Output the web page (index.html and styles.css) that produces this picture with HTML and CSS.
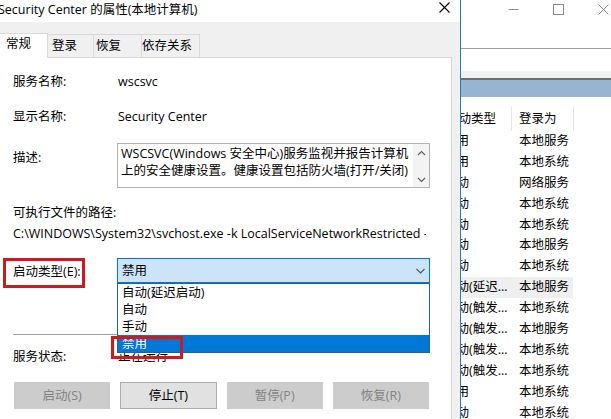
FILE: index.html
```html
<!DOCTYPE html>
<html lang="zh-CN">
<head>
<meta charset="utf-8">
<title>Security Center 的属性</title>
<link rel="stylesheet" href="styles.css">
</head>
<body>
<div class="screen">
  <div class="dialog">
    <div class="d-title">
      <span class="d-title-text">Security Center 的属性(本地计算机)</span>
      <svg class="d-close" width="11" height="11" viewBox="0 0 11 11"><path d="M0.5 0.5L10.5 10.5M10.5 0.5L0.5 10.5" stroke="#000" stroke-width="1.1" fill="none"/></svg>
    </div>
    <div class="tabs">
      <div class="tab active t1">常规</div>
      <div class="tab t2">登录</div>
      <div class="tab t3">恢复</div>
      <div class="tab t4">依存关系</div>
      <div class="tab-fill"></div>
    </div>
    <div class="panel">
      <div class="row r1"><div class="lbl">服务名称:</div><div class="val">wscsvc</div></div>
      <div class="row r2"><div class="lbl">显示名称:</div><div class="val">Security Center</div></div>
      <div class="row desc-row">
        <div class="lbl desc-lbl">描述:</div>
        <div class="desc-box">
          <div class="desc-text">WSCSVC(Windows 安全中心)服务监视并报告计算机<br>上的安全健康设置。健康设置包括防火墙(打开/关闭)</div>
          <div class="vscroll">
            <svg width="9" height="6" viewBox="0 0 9 6"><path d="M1 5L4.5 1.5L8 5" stroke="#606060" stroke-width="1.2" fill="none"/></svg>
            <svg width="9" height="6" viewBox="0 0 9 6"><path d="M1 1L4.5 4.5L8 1" stroke="#606060" stroke-width="1.2" fill="none"/></svg>
          </div>
        </div>
      </div>
      <div class="exe-lbl">可执行文件的路径:</div>
      <div class="exe-path">C:\WINDOWS\System32\svchost.exe -k LocalServiceNetworkRestricted -p</div>
      <div class="row start-row">
        <div class="lbl">启动类型(E):</div>
        <div class="combo-wrap">
          <div class="combo">
            <span>禁用</span>
            <svg width="9" height="6" viewBox="0 0 9 6"><path d="M0.5 1L4.5 5L8.5 1" stroke="#555" stroke-width="1.1" fill="none"/></svg>
          </div>
          <div class="dropdown">
            <div class="opt">自动(延迟启动)</div>
            <div class="opt">自动</div>
            <div class="opt">手动</div>
            <div class="opt sel">禁用</div>
          </div>
          <div class="hl-box"></div>
        </div>
        <div class="hl-label"></div>
      </div>
      <div class="sep"></div>
      <div class="row status-row"><div class="lbl">服务状态:</div><div class="val">正在运行</div></div>
      <div class="buttons">
        <div class="btn dis">启动(S)</div>
        <div class="btn en">停止(T)</div>
        <div class="btn dis">暂停(P)</div>
        <div class="btn dis">恢复(R)</div>
      </div>
    </div>
  </div>
  <div class="rwin">
    <div class="rw-top">
      <div class="rw-caps">
        <div class="cap"><svg width="11" height="11" viewBox="0 0 11 11"><path d="M0.5 5.5H10.5" stroke="#8a8a8a" stroke-width="1"/></svg></div>
        <div class="cap"><svg width="11" height="11" viewBox="0 0 11 11"><rect x="0.5" y="0.5" width="10" height="10" stroke="#8a8a8a" stroke-width="1" fill="none"/></svg></div>
        <div class="cap"><svg width="11" height="11" viewBox="0 0 11 11"><path d="M0.5 0.5L10.5 10.5M10.5 0.5L0.5 10.5" stroke="#8a8a8a" stroke-width="1" fill="none"/></svg></div>
      </div>
    </div>
    <div class="rw-tool"></div>
    <div class="rw-band1"></div>
    <div class="rw-band2"></div>
    <div class="rw-band3"></div>
    <div class="rw-gap"></div>
    <div class="lhead">
      <div class="hc1">启动类型</div>
      <div class="hc2">登录为</div>
    </div>
    <div class="lrow"><div class="c1">禁用</div><div class="c2">本地服务</div></div>
    <div class="lrow"><div class="c1">禁用</div><div class="c2">本地系统</div></div>
    <div class="lrow"><div class="c1">自动</div><div class="c2">网络服务</div></div>
    <div class="lrow"><div class="c1">自动</div><div class="c2">本地系统</div></div>
    <div class="lrow"><div class="c1">自动</div><div class="c2">本地系统</div></div>
    <div class="lrow"><div class="c1">自动</div><div class="c2">本地服务</div></div>
    <div class="lrow"><div class="c1">自动</div><div class="c2">本地系统</div></div>
    <div class="lrow hover"><div class="c1">自动(延迟启动)</div><div class="c2">本地服务</div></div>
    <div class="lrow"><div class="c1">自动(触发启动)</div><div class="c2">本地系统</div></div>
    <div class="lrow"><div class="c1">自动(触发启动)</div><div class="c2">本地服务</div></div>
    <div class="lrow"><div class="c1">自动(触发启动)</div><div class="c2">本地系统</div></div>
    <div class="lrow"><div class="c1">自动(触发启动)</div><div class="c2">本地系统</div></div>
    <div class="lrow"><div class="c1">禁用</div><div class="c2">本地系统</div></div>
    <div class="lrow"><div class="c1">自动</div><div class="c2">本地系统</div></div>
  </div>
</div>
</body>
</html>
```

FILE: styles.css
```css
* { box-sizing: border-box; }
html, body { margin: 0; padding: 0; }
body {
  width: 611px;
  height: 419px;
  overflow: hidden;
  background: #fff;
  color: #000;
  font-family: "Open Sans", "Noto Sans CJK SC", sans-serif;
  font-size: 12.5px;
}
.screen { display: flex; height: 419px; }

/* dialog */
.dialog {
  width: 461px;
  flex: none;
  border-right: 1px solid #2b79c2;
  background: #f0f0f0;
  display: flex;
  flex-direction: column;
}
.d-title {
  height: 22px;
  background: #fff;
  display: flex;
  justify-content: space-between;
  align-items: flex-start;
  padding-right: 10px;
  flex: none;
}
.d-title-text { margin-left: -2px; line-height: 20px; white-space: nowrap; }
.d-close { margin-top: 2px; }

.tabs {
  height: 36px;
  flex: none;
  display: flex;
  align-items: flex-end;
  margin-right: 8px;
}
.tab {
  height: 24px;
  line-height: 21px;
  border-top: 1px solid #d9d9d9;
  border-right: 1px solid #d9d9d9;
  border-bottom: 1px solid #d9d9d9;
  background: #f0f0f0;
  white-space: nowrap;
}
.tab.active { height: 25px; background: #fff; border-bottom: none; line-height: 20px; }
.t1 { width: 48px; padding-left: 6px; }
.t2 { width: 46px; padding-left: 4px; }
.t3 { width: 48px; padding-left: 2px; }
.t4 { width: 58px; padding-left: 0; }
.tab-fill { flex: 1; height: 1px; background: #d9d9d9; }

.panel {
  flex: 1;
  background: #fff;
  border-right: 1px solid #d9d9d9;
  margin-right: 8px;
  padding-left: 13px;
}
.row { display: flex; }
.lbl { width: 104px; flex: none; white-space: nowrap; }
.val { padding-left: 1px; white-space: nowrap; }
.r1 { margin-top: 14px; height: 20px; line-height: 20px; }
.r2 { margin-top: 15px; height: 20px; line-height: 20px; }
.desc-row { margin-top: 16px; height: 45px; }
.desc-lbl { padding-top: 5px; line-height: 20px; }
.desc-box {
  width: 313px;
  height: 45px;
  border: 1px solid #b4b4b4;
  display: flex;
  overflow: hidden;
}
.desc-text {
  flex: 1;
  padding: 1px 0 0 3px;
  line-height: 17px;
  white-space: nowrap;
  overflow: hidden;
}
.vscroll {
  width: 16px;
  flex: none;
  background: #f3f3f3;
  display: flex;
  flex-direction: column;
  align-items: center;
  justify-content: space-between;
  padding: 6px 0 4px;
}
.exe-lbl { margin-top: 15px; height: 20px; line-height: 20px; }
.exe-path {
  margin-top: 1px;
  height: 20px;
  line-height: 20px;
  width: 413px;
  white-space: nowrap;
  overflow: hidden;
}
.start-row {
  margin-top: 14px;
  height: 25px;
  position: relative;
  align-items: center;
}
.combo-wrap { position: relative; width: 313px; height: 25px; }
.combo {
  height: 25px;
  border: 1px solid #0078d7;
  background: #cce4f7;
  display: flex;
  justify-content: space-between;
  align-items: center;
  padding: 0 4px 0 4px;
  line-height: 23px;
}
.combo svg { margin-right: 0; }
.dropdown {
  position: absolute;
  left: 0;
  top: 25px;
  width: 313px;
  height: 70px;
  border: 1px solid #2a5f93;
  background: #fff;
  z-index: 2;
}
.opt { height: 17px; line-height: 17px; padding-left: 4px; white-space: nowrap; }
.opt.sel { background: #0078d7; color: #fff; }
.hl-box {
  position: absolute;
  left: -6px;
  top: 78px;
  width: 72px;
  height: 23px;
  border: 3px solid #cc1a1f;
  z-index: 3;
}
.hl-label {
  position: absolute;
  left: -10px;
  top: 0;
  width: 82px;
  height: 30px;
  border: 3px solid #cc1a1f;
}
.sep { margin-top: 51px; height: 1px; width: 417px; background: #a0a0a0; }
.status-row { margin-top: 12px; height: 20px; line-height: 20px; }
.buttons {
  margin-top: 15px;
  margin-left: 1px;
  width: 415px;
  display: grid;
  grid-template-columns: repeat(4, 1fr);
  column-gap: 10px;
}
.btn {
  height: 27px;
  line-height: 25px;
  text-align: center;
  border: 1px solid #adadad;
  white-space: nowrap;
}
.btn.dis { background: #cccccc; border-color: #cccccc; color: #838383; }
.btn.en { background: #e1e1e1; }

/* right window */
.rwin { flex: 1; background: #fff; overflow: hidden; }
.rw-top { height: 49px; border-bottom: 1px solid #a0a0a0; }
.rw-caps { display: flex; padding-left: 30px; height: 19px; align-items: center; width: 200px; }
.cap { width: 45px; flex: none; display: flex; justify-content: center; }
.rw-tool { height: 22px; }
.rw-band1 { height: 7px; background: #f0f0f0; }
.rw-band2 { height: 2px; background: #6d6d6d; }
.rw-band3 { height: 17px; background: #99b4d1; }
.rw-gap { height: 10px; }
.lhead { display: flex; height: 24px; line-height: 24px; }
.hc1 {
  width: 51px;
  flex: none;
  border-right: 1px solid #e5e5e5;
  text-indent: -15px;
  white-space: nowrap;
  overflow: visible;
}
.hc2 { width: 62px; flex: none; border-right: 1px solid #e5e5e5; padding-left: 7px; white-space: nowrap; }
.lrow { display: flex; height: 20.9px; line-height: 20.9px; width: 112px; }
.lrow.hover { background: #efefef; }
.c1 {
  width: 68px;
  flex: none;
  margin-left: -17px;
  padding-right: 3px;
  white-space: nowrap;
  overflow: hidden;
  text-overflow: ellipsis;
}
.c2 { padding-left: 7px; white-space: nowrap; }
```
